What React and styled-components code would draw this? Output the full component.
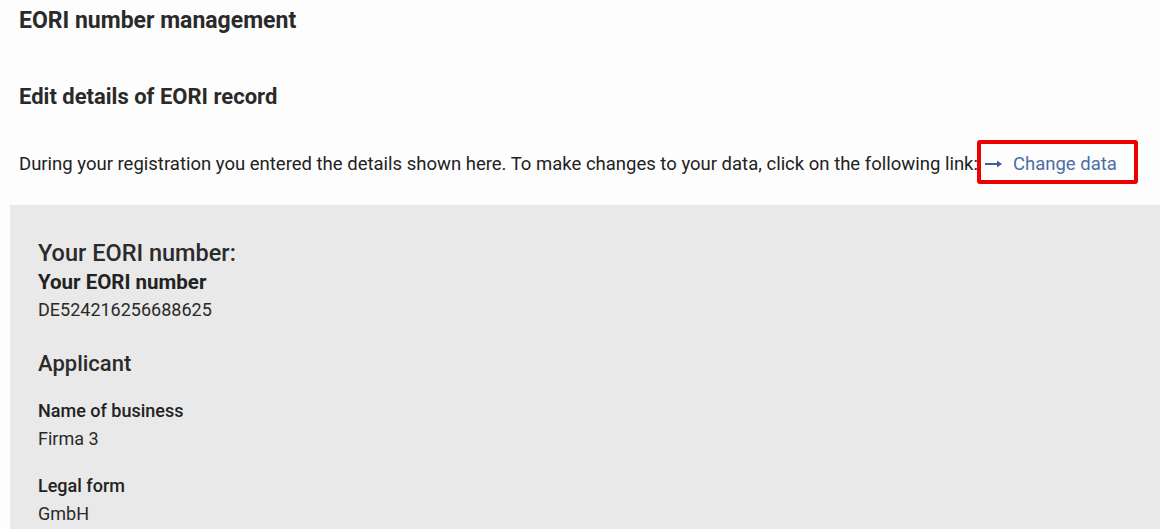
import React from 'react';
import styled, { createGlobalStyle } from 'styled-components';

const GlobalStyle = createGlobalStyle`
  html, body {
    margin: 0;
    padding: 0;
    background: #fdfdfd;
    font-family: Roboto, "Liberation Sans", sans-serif;
    color: #222;
  }
`;

const Page = styled.div`
  width: 1160px;
  height: 529px;
  overflow: hidden;
`;

const Header = styled.div`
  padding: 8px 0 0 19px;
`;

const Title = styled.h1`
  margin: 0;
  font-size: 23px;
  font-weight: 700;
  line-height: 26px;
  color: #2a2a2a;
`;

const SubTitle = styled.h2`
  margin: 50px 0 0;
  font-size: 22px;
  font-weight: 700;
  line-height: 26px;
  color: #2a2a2a;
`;

const Intro = styled.p`
  margin: 42px 0 0;
  font-size: 18.5px;
  line-height: 24px;
  color: #222;
  display: flex;
  align-items: center;
  white-space: nowrap;
`;

const LinkWrap = styled.span`
  position: relative;
  display: inline-flex;
  align-items: center;
  gap: 10px;
  margin-left: 7px;
  color: #4a6ea6;
`;

const Highlight = styled.span`
  position: absolute;
  left: -8px;
  top: 50%;
  transform: translateY(calc(-50% - 2px));
  width: 161px;
  height: 44px;
  box-sizing: border-box;
  border: 4px solid #ec0000;
  border-radius: 3px;
  pointer-events: none;
`;

const Panel = styled.section`
  margin: 29px 0 0 10px;
  background: #e9e9e9;
  padding: 33px 28px 40px;
  min-height: 400px;
`;

const PanelHeading = styled.h3`
  margin: ${p => p.$top || 0}px 0 0;
  font-size: ${p => p.$size || 22}px;
  font-weight: 500;
  line-height: 30px;
  color: #2b2b2b;
`;

const FieldLabel = styled.div`
  margin-top: ${p => p.$top || 0}px;
  font-size: ${p => p.$size || 18}px;
  font-weight: ${p => p.$weight || 500};
  line-height: 28px;
  color: #222;
`;

const FieldValue = styled.div`
  font-size: 18px;
  line-height: 28px;
  color: #2a2a2a;
`;

function Arrow() {
  return (
    <svg width="18" height="10" viewBox="0 0 18 10">
      <path d="M0 5h15" stroke="#3d5f95" strokeWidth="2" />
      <path d="M12 1.5L17 5l-5 3.5z" fill="#3d5f95" />
    </svg>
  );
}

export default function App() {
  return (
    <Page>
      <GlobalStyle />
      <Header>
        <Title>EORI number management</Title>
        <SubTitle>Edit details of EORI record</SubTitle>
        <Intro>
          During your registration you entered the details shown here. To make changes to your data, click on the following link:
          <LinkWrap>
            <Highlight />
            <Arrow />
            Change data
          </LinkWrap>
        </Intro>
      </Header>
      <Panel>
        <PanelHeading $size={23.5}>Your EORI number:</PanelHeading>
        <FieldLabel $size={20.5} $weight={700}>Your EORI number</FieldLabel>
        <FieldValue>DE524216256688625</FieldValue>
        <PanelHeading $top={25}>Applicant</PanelHeading>
        <FieldLabel $top={18}>Name of business</FieldLabel>
        <FieldValue>Firma 3</FieldValue>
        <FieldLabel $top={19}>Legal form</FieldLabel>
        <FieldValue>GmbH</FieldValue>
      </Panel>
    </Page>
  );
}
